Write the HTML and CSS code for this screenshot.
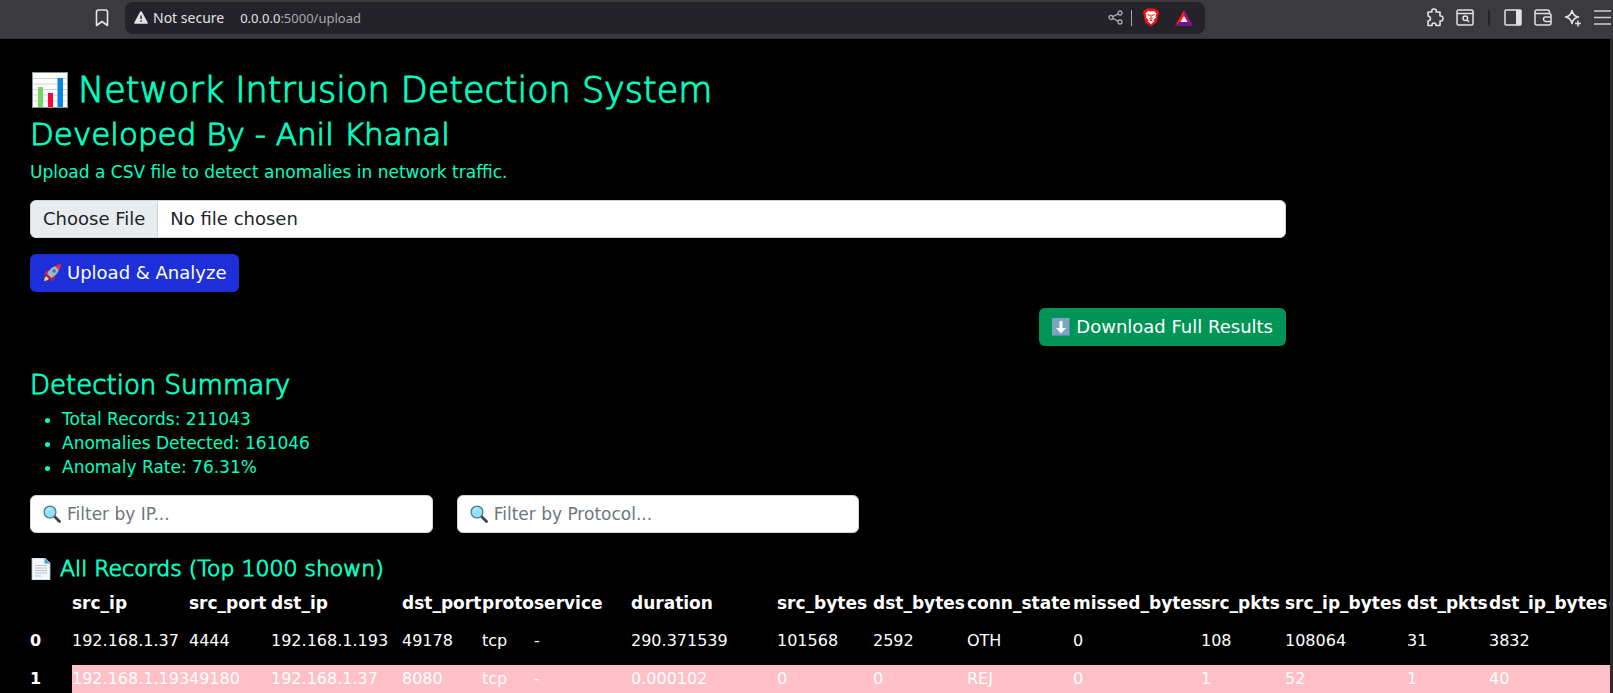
FILE: index.html
```html
<!DOCTYPE html>
<html lang="en">
<head>
<meta charset="utf-8">
<title>Network Intrusion Detection System</title>
<link rel="stylesheet" href="styles.css">
</head>
<body>
<header class="toolbar">
  <button class="tool" type="button" aria-label="Bookmark">
    <svg width="14" height="18" viewBox="0 0 14 18"><path d="M1.5 3Q1.500 1 3.500 1H10.500Q12.500 1 12.500 3V16.500L7 12.500L1.500 16.500Z" fill="none" stroke="#e6e6ea" stroke-width="1.600" stroke-linejoin="round"/></svg>
  </button>
  <div class="address">
    <svg width="14" height="13" viewBox="0 0 14 13"><path d="M7 1L13 12H1Z" fill="#e2e2e6" stroke="#e2e2e6" stroke-width="1.600" stroke-linejoin="round"/><path d="M7 4.500V8M7 9.300V10.800" stroke="#3a3940" stroke-width="1.600"/></svg>
    <span class="security">Not secure</span>
    <span class="url"><span class="host">0.0.0.0</span>:5000/upload</span>
    <span class="address-actions">
      <svg width="15" height="15" viewBox="0 0 15 15" fill="none" stroke="#a9a8ae" stroke-width="1.300"><circle cx="3" cy="7.500" r="2"/><circle cx="12" cy="3" r="2"/><circle cx="12" cy="12" r="2"/><path d="M4.800 6.600L10.200 3.900M4.800 8.400L10.200 11.100"/></svg>
      <span class="rule"></span>
      <svg class="shield" width="16" height="19" viewBox="0 0 16 19"><path d="M4 .5H12L13.500 2L15 2L16 5L15.200 7L14 14L8 18.500L2 14L.8 7L0 5L1 2L2.500 2Z" fill="#f31414"/><path d="M5 3L8 3.500L11 3L13.500 5.500L12.500 8L13 9.500L10.500 12L11 13.500L8 16L5 13.500L5.500 12L3 9.500L3.500 8L2.500 5.500Z" fill="#fff"/><path d="M4.500 6.500L7 7.500M11.500 6.500L9 7.500M8 6.500V10.500M6.300 10.300L8 11.300L9.700 10.300M6.500 13L8 12.200L9.500 13" stroke="#f31414" stroke-width="1" fill="none"/></svg>
      <svg width="18" height="16" viewBox="0 0 18 16"><path d="M9 0L0 16L9 10Z" fill="#ff1a1a"/><path d="M9 0L18 16L9 10Z" fill="#a3127a"/><path d="M0 16H18L9 9Z" fill="#6a1591"/><path d="M9 6L12.500 12H5.500Z" fill="#fff"/></svg>
    </span>
  </div>
  <div class="tools">
    <svg width="18" height="19" viewBox="0 0 18 19"><path d="M2 4H6Q5 1 8 1T10 4H14V8Q17 7.500 17 10.500T14 13V17.500H10Q10 15 8 15T6 17.500H2V13Q4.500 12.500 4.500 10.500T2 8Z" fill="none" stroke="#e2e2e6" stroke-width="1.600" stroke-linejoin="round"/></svg>
    <svg width="18" height="17" viewBox="0 0 18 17" fill="none" stroke="#e2e2e6" stroke-width="1.500"><rect x="1" y="1" width="16" height="15" rx="1.500"/><path d="M1 4.500H17M11 11L13 13"/><circle cx="9.300" cy="9.300" r="2.300"/></svg>
    <span class="divider"></span>
    <svg width="18" height="17" viewBox="0 0 18 17"><rect x="1" y="1" width="16" height="15" rx="1" fill="none" stroke="#e2e2e6" stroke-width="1.500"/><path d="M12 1H17V16H12Z" fill="#e2e2e6"/></svg>
    <svg width="18" height="17" viewBox="0 0 18 17" fill="none" stroke="#e2e2e6" stroke-width="1.500"><path d="M15.500 4.500V3Q15.500 1 13.500 1H3Q1 1 1 3V14Q1 16 3 16H15Q17 16 17 14V6.500Q17 4.500 15 4.500H1M17 8H11.500Q9.500 8 9.500 10T11.500 12.500H17"/></svg>
    <svg width="18" height="18" viewBox="0 0 18 18" fill="none" stroke="#e2e2e6" stroke-width="1.500" stroke-linejoin="round"><path d="M8 1.500Q9 7 14.500 8Q9 9 8 14.500Q7 9 1.500 8Q7 7 8 1.500ZM14 11.500V17.500M11 14.500H17"/></svg>
    <svg class="menu" width="17" height="15" viewBox="0 0 17 15"><path d="M0 1H17M0 7.500H17M0 14H17" stroke="#cfcfd3" stroke-width="1.600"/></svg>
  </div>
</header>
<div class="viewport">
<main class="page">
  <div class="container">
    <h1><svg class="emoji" viewBox="0 0 36 36"><path d="M0 0H36V36H0Z" fill="#fdfdfd"/><path d="M0 6.500H36M0 12H36M0 17.500H36M0 23H36M0 29H36" stroke="#cfd6d8"/><path d="M.5.5H35.500V35.500H.5Z" fill="none" stroke="#7f9695"/><path d="M6 15H11V35H6Z" fill="#78d65f"/><path d="M16 21H21V35H16Z" fill="#fb0735"/><path d="M25.500 6H31V35H25.500Z" fill="#0b84e8"/></svg>Network Intrusion Detection System</h1>
    <h2>Developed By - Anil Khanal</h2>
    <p class="lead">Upload a CSV file to detect anomalies in network traffic.</p>
    <form class="upload">
      <input class="file" type="file" aria-label="CSV file">
      <button class="btn primary" type="button"><svg class="emoji" viewBox="0 0 18 18"><path d="M6 6Q2 6 1 11L5 10ZM12 12Q12 16 7 17.500L8 13Z" fill="#d81b35"/><path d="M4 10Q8 2 14 2L16 4Q16 10 8 14Z" fill="#9fb9c2"/><path d="M12 2Q15 0 18 0Q18 4 16 6Z" fill="#ef2436"/><circle cx="11" cy="7" r="1.800" fill="#3478a8"/><path d="M4 10L8 14L6 15L3 12Z" fill="#b71c35"/><path d="M3 12L6 15Q4 17 1 17Q1 14 3 12Z" fill="#ffd35a"/></svg>Upload &amp; Analyze</button>
    </form>
    <div class="download"><a class="btn success" href="#results"><svg class="emoji" viewBox="0 0 18 18"><rect width="18" height="18" rx="1" fill="#78a8c0"/><path d="M.5 17.500H17.500V.5" fill="none" stroke="#568aa2"/><path d="M7.500 3H10.500V10H14L9 15.500L4 10H7.500Z" fill="#fff"/></svg>Download Full Results</a></div>
    <h3>Detection Summary</h3>
    <ul class="summary">
      <li>Total Records: 211043</li>
      <li>Anomalies Detected: 161046</li>
      <li>Anomaly Rate: 76.31%</li>
    </ul>
    <div class="filters">
      <label class="field"><svg class="emoji" viewBox="0 0 18 18"><path d="M10.500 10.500L16.500 16.500" stroke="#3d4347" stroke-width="2.800" stroke-linecap="round"/><circle cx="7" cy="7" r="5.900" fill="#94e1fb" stroke="#587887" stroke-width="1.300"/><path d="M4 6Q5 3.500 7.500 3.500" stroke="#d5f6ff" fill="none"/></svg><input type="text" placeholder="Filter by IP..." aria-label="Filter by IP"></label>
      <label class="field"><svg class="emoji" viewBox="0 0 18 18"><path d="M10.500 10.500L16.500 16.500" stroke="#3d4347" stroke-width="2.800" stroke-linecap="round"/><circle cx="7" cy="7" r="5.900" fill="#94e1fb" stroke="#587887" stroke-width="1.300"/><path d="M4 6Q5 3.500 7.500 3.500" stroke="#d5f6ff" fill="none"/></svg><input type="text" placeholder="Filter by Protocol..." aria-label="Filter by Protocol"></label>
    </div>
    <h4><svg class="emoji" viewBox="0 0 22 22"><path d="M2 0H15L20 5V22H2Z" fill="#f4f8fa" stroke="#a3c9dc" stroke-width=".8"/><path d="M14.500 0V5.500H20Z" fill="#3e9bd0"/><path d="M5 7.500H17M5 10H17M5 12.500H17M5 15H17M5 18H11" stroke="#b4bec3"/></svg>All Records (Top 1000 shown)</h4>
  </div>
  <table class="records" id="results">
    <colgroup><col class="c-index"><col class="c-src-ip"><col class="c-src-port"><col class="c-dst-ip"><col class="c-dst-port"><col class="c-proto"><col class="c-service"><col class="c-duration"><col class="c-src-bytes"><col class="c-dst-bytes"><col class="c-state"><col class="c-missed"><col class="c-src-pkts"><col class="c-src-ip-bytes"><col class="c-dst-pkts"><col class="c-dst-ip-bytes"><col class="c-last"></colgroup>
    <thead><tr><th></th><th>src_ip</th><th>src_port</th><th>dst_ip</th><th>dst_port</th><th>proto</th><th>service</th><th>duration</th><th>src_bytes</th><th>dst_bytes</th><th>conn_state</th><th>missed_bytes</th><th>src_pkts</th><th>src_ip_bytes</th><th>dst_pkts</th><th>dst_ip_bytes</th><th>d</th></tr></thead>
    <tbody>
      <tr><th>0</th><td>192.168.1.37</td><td>4444</td><td>192.168.1.193</td><td>49178</td><td>tcp</td><td>-</td><td>290.371539</td><td>101568</td><td>2592</td><td>OTH</td><td>0</td><td>108</td><td>108064</td><td>31</td><td>3832</td><td></td></tr>
      <tr class="anomaly"><th>1</th><td>192.168.1.193</td><td>49180</td><td>192.168.1.37</td><td>8080</td><td>tcp</td><td>-</td><td>0.000102</td><td>0</td><td>0</td><td>REJ</td><td>0</td><td>1</td><td>52</td><td>1</td><td>40</td><td></td></tr>
    </tbody>
  </table>
</main>
</div>
</body>
</html>
```
FILE: styles.css
```css
* { box-sizing: border-box; }
body {
  margin: 0;
  height: 100vh;
  overflow: hidden;
  display: flex;
  flex-direction: column;
  background: #000;
  color: #00ffc3;
  font: 400 17px/24px "DejaVu Sans", sans-serif;
}
svg { display: block; flex: none; }
input, button { font: inherit; }

.toolbar {
  flex: none;
  height: 39px;
  padding: 0 2px 3px 95px;
  display: flex;
  align-items: center;
  background: #3b3a3f;
  border-bottom: 1px solid #323136;
  color: #e2e2e6;
  font: 400 14px/20px "Noto Sans", sans-serif;
}
.tool { padding: 0; border: 0; background: none; }
.address {
  width: 1080px;
  height: 32px;
  margin-left: 16px;
  padding: 0 12px 0 9px;
  display: flex;
  align-items: center;
  border-radius: 8px;
  background: #242329;
}
.security { margin: 0 16px 0 5px; }
.url { color: #a9a8ae; font-size: 13px; }
.host { color: #e2e2e6; }
.address-actions { margin-left: auto; display: flex; align-items: center; gap: 8px; }
.rule { width: 1px; height: 16px; background: #a9a8ae; }
.shield { margin: 0 8px 0 3px; }
.tools { margin-left: auto; display: flex; align-items: center; gap: 12px; }
.divider { width: 2px; height: 16px; margin: 0 2px; background: #242329; }

.viewport { flex: 1; min-height: 0; overflow: hidden; border-right: 3px solid #2d2d2d; }
.page { padding: 27px 0 0 30px; }
.container { width: calc(100% - 30px); max-width: 1256px; }
h1, h2, h3, h4 { margin: 0; font-weight: 200; display: flex; align-items: center; -webkit-text-stroke: 1px currentColor; }
.emoji { width: 18px; height: 18px; margin-right: 6px; }
h1 { font-size: 35px; line-height: 48px; }
h1 .emoji { width: 36px; height: 36px; margin: 0 10px 0 2px; }
h2 { font-size: 31px; line-height: 40px; }
.lead { margin: 6px 0 16px; }
.upload { display: flex; flex-direction: column; align-items: flex-start; gap: 16px; }
.file {
  width: 100%;
  height: 38px;
  padding: 6px 12px;
  overflow: hidden;
  border: 1px solid #ced4da;
  border-radius: 6px;
  background: #fff;
  color: #212529;
  font-size: 18px;
  line-height: 24px;
}
.file::file-selector-button {
  margin: -6px 12px -6px -12px;
  padding: 6px 12px;
  border: 0;
  border-right: 1px solid #ced4da;
  background: #e9ecef;
  color: #212529;
  font: inherit;
}
.btn {
  height: 38px;
  padding: 0 13px;
  display: inline-flex;
  align-items: center;
  border: 0;
  border-radius: 6px;
  color: #fff;
  font-size: 18px;
  text-decoration: none;
}
.primary { background: #1c2fd8; }
.success { background: #009456; }
.download { margin: 16px 0 24px; display: flex; justify-content: flex-end; }
h3 { font-size: 26px; line-height: 30px; }
.summary { margin: 7px 0 16px; padding-left: 32px; }
.filters { display: grid; grid-template-columns: repeat(3, 1fr); gap: 24px; }
.field {
  height: 38px;
  padding: 0 12px;
  display: flex;
  align-items: center;
  border: 1px solid #ced4da;
  border-radius: 6px;
  background: #fff;
}
.field input { flex: 1; min-width: 0; padding: 0; border: 0; outline: 0; background: none; color: #212529; }
.field input::placeholder { color: #6c757d; opacity: 1; }
h4 { margin-top: 24px; font-size: 22px; line-height: 24px; }
h4 .emoji { width: 22px; height: 22px; margin-right: 8px; }

.records { width: 1673px; margin-top: 8px; table-layout: fixed; border-collapse: collapse; color: #fff; font-size: 16px; }
.records th, .records td { height: 38px; padding: 2px 0 0; text-align: left; vertical-align: top; white-space: nowrap; }
.records th { font-weight: 700; }
.records thead th { font-size: 17px; }
.anomaly td { background: #ffc0c8; }
.c-index { width: 42px; }
.c-src-ip { width: 117px; }
.c-src-port { width: 82px; }
.c-dst-ip { width: 131px; }
.c-dst-port { width: 80px; }
.c-proto { width: 52px; }
.c-service { width: 97px; }
.c-duration { width: 146px; }
.c-src-bytes { width: 96px; }
.c-dst-bytes { width: 94px; }
.c-state { width: 106px; }
.c-missed { width: 128px; }
.c-src-pkts { width: 84px; }
.c-src-ip-bytes { width: 122px; }
.c-dst-pkts { width: 82px; }
.c-dst-ip-bytes { width: 120px; }
.c-last { width: 94px; }
```
